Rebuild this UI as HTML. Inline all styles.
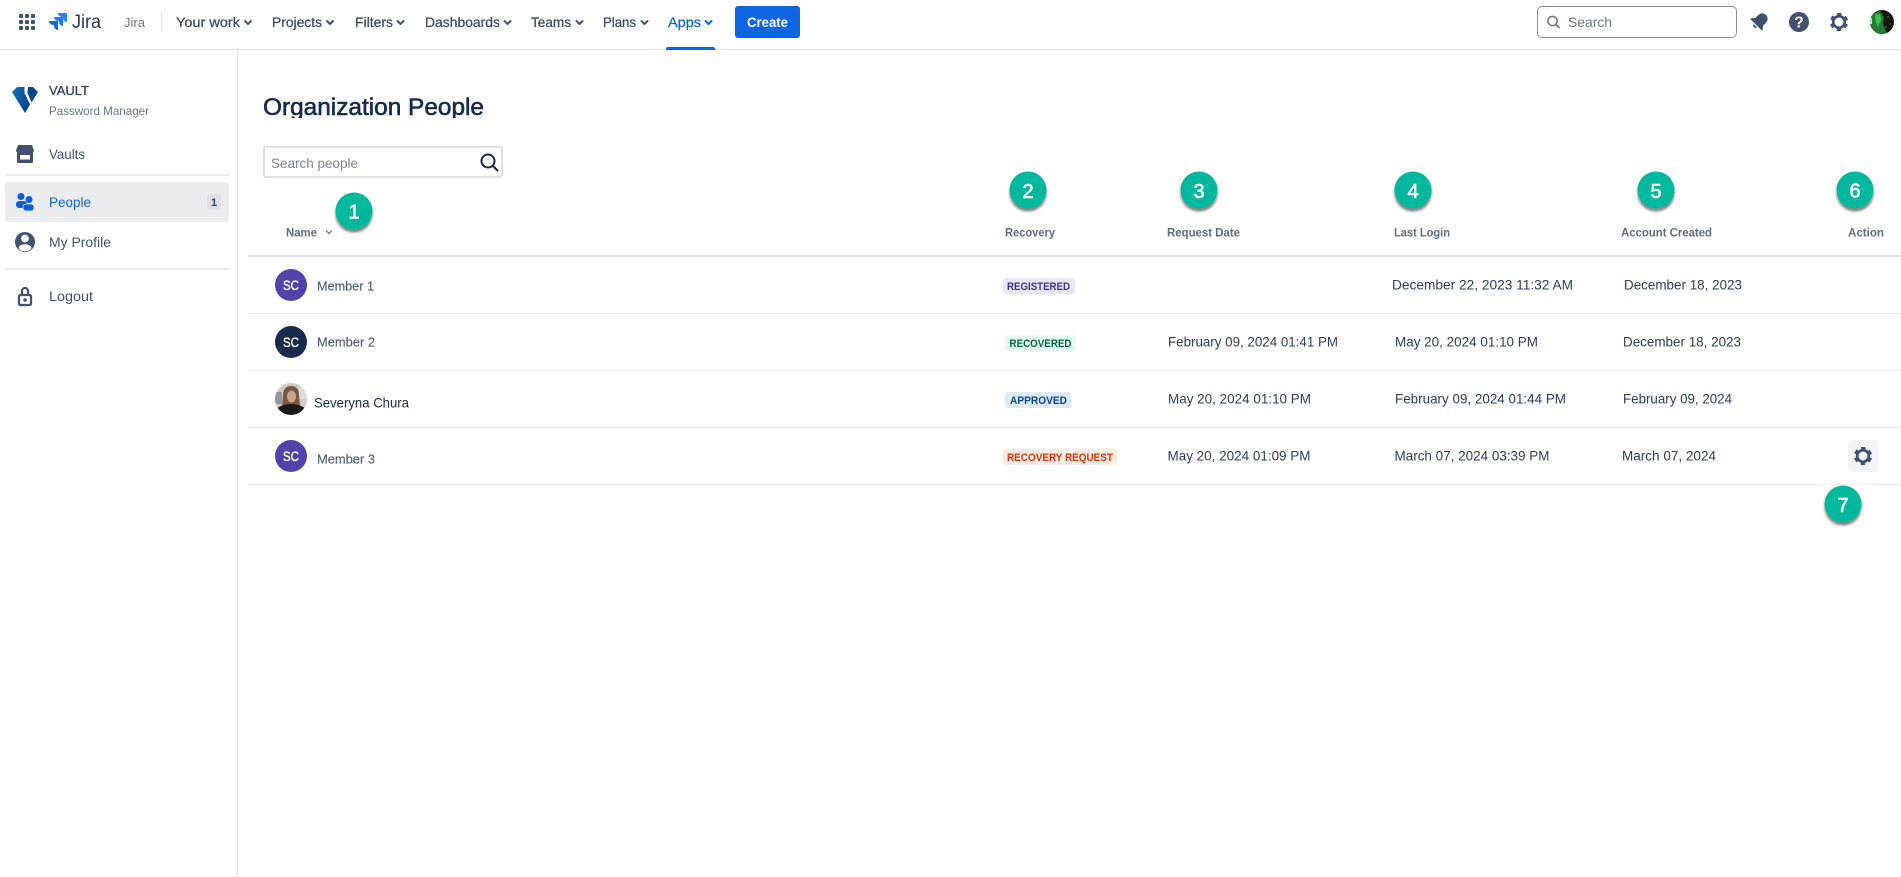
<!DOCTYPE html>
<html lang="en">
<head>
<meta charset="utf-8">
<title>Organization People</title>
<style>
html,body{margin:0;padding:0;background:#fff;width:1901px;height:877px;overflow:hidden}
svg{display:block}
text{font-family:"Liberation Sans",sans-serif;white-space:pre}
.nav{font-size:14px;fill:#3b4a66;stroke:#3b4a66;stroke-width:.25px}
.side{font-size:14px;fill:#42526e}
.th{font-size:12px;font-weight:bold;fill:#5e6c84}
.td{font-size:14px;fill:#2c3e5d}
.mem{font-size:13px;fill:#505f79;stroke:#505f79;stroke-width:.15px}
.tag{font-size:11px;font-weight:bold}
.sc{font-size:14px;fill:#fff;stroke:#fff;stroke-width:.35px}
.num{font-size:20px;fill:#fff;stroke:#fff;stroke-width:.6px;text-anchor:middle}
.chev{fill:none;stroke:#42526e;stroke-width:2;stroke-linecap:round;stroke-linejoin:round}
.cn{fill:#00b89c}
</style>
</head>
<body>
<svg xmlns="http://www.w3.org/2000/svg" width="1901" height="877" viewBox="0 0 1901 877">
<defs>
  <filter id="sh" x="-30%" y="-30%" width="160%" height="170%">
    <feDropShadow dx="0" dy="3" stdDeviation="1.2" flood-color="#000" flood-opacity=".5"/>
  </filter>
  <clipPath id="titleclip"><rect x="255" y="90" width="260" height="28"/></clipPath>
  <clipPath id="ava3"><circle cx="291" cy="399" r="16"/></clipPath>
  <clipPath id="avaTop"><circle cx="1882" cy="22" r="12"/></clipPath>
  <linearGradient id="vg" x1="0" y1="0" x2="1" y2="1">
    <stop offset="0" stop-color="#1170bb"/><stop offset=".6" stop-color="#0b4f96"/><stop offset="1" stop-color="#0a3d7d"/>
  </linearGradient>
  <g id="gear">
    <circle cx="0" cy="0" r="5.8" fill="none" stroke="#42526e" stroke-width="2.7"/>
    <circle cx="0" cy="0" r="8" fill="none" stroke="#42526e" stroke-width="2.2" stroke-dasharray="4.4 3.978" stroke-dashoffset="-2"/>
  </g>
</defs>

<rect width="1901" height="877" fill="#fff"/>

<!-- top nav -->
<rect x="0" y="49" width="1901" height="1" fill="#dfe1e6"/>
<g fill="#42526e">
  <rect x="19" y="14" width="4" height="4" rx="1"/><rect x="25" y="14" width="4" height="4" rx="1"/><rect x="31" y="14" width="4" height="4" rx="1"/>
  <rect x="19" y="20" width="4" height="4" rx="1"/><rect x="25" y="20" width="4" height="4" rx="1"/><rect x="31" y="20" width="4" height="4" rx="1"/>
  <rect x="19" y="26" width="4" height="4" rx="1"/><rect x="25" y="26" width="4" height="4" rx="1"/><rect x="31" y="26" width="4" height="4" rx="1"/>
</g>
<path transform="translate(58,13)" fill="#2684ff" d="M0 0H9V9C6.500 9 5 7 5 4.500V4C2 4 0 2.500 0 0Z"/>
<path transform="translate(54,17)" fill="#1d7afc" d="M0 0H9V9C6.500 9 5 7 5 4.500V4C2 4 0 2.500 0 0Z"/>
<path transform="translate(49,21)" fill="#0c66e4" d="M0 0H9V9C6.500 9 5 7 5 4.500V4C2 4 0 2.500 0 0Z"/>
<text x="72" y="28" font-size="19" fill="#253858" textLength="29" lengthAdjust="spacingAndGlyphs">Jira</text>
<text x="124" y="27" font-size="13" fill="#6b778c" textLength="21" lengthAdjust="spacingAndGlyphs">Jira</text>
<rect x="161" y="12" width="1" height="20" fill="#dfe1e6"/>

<text class="nav" x="176" y="27" textLength="64" lengthAdjust="spacingAndGlyphs">Your work</text>
<path class="chev" d="M245 21l3 3 3-3"/>
<text class="nav" x="272" y="27" textLength="50" lengthAdjust="spacingAndGlyphs">Projects</text>
<path class="chev" d="M327 21l3 3 3-3"/>
<text class="nav" x="355" y="27" textLength="38" lengthAdjust="spacingAndGlyphs">Filters</text>
<path class="chev" d="M397.500 21l3 3 3-3"/>
<text class="nav" x="425" y="27" textLength="75" lengthAdjust="spacingAndGlyphs">Dashboards</text>
<path class="chev" d="M504.500 21l3 3 3-3"/>
<text class="nav" x="531" y="27" textLength="40" lengthAdjust="spacingAndGlyphs">Teams</text>
<path class="chev" d="M576.500 21l3 3 3-3"/>
<text class="nav" x="603" y="27" textLength="33" lengthAdjust="spacingAndGlyphs">Plans</text>
<path class="chev" d="M641.500 21l3 3 3-3"/>
<text class="nav" x="668" y="27" textLength="33" lengthAdjust="spacingAndGlyphs" style="fill:#0c66e4;stroke:#0c66e4">Apps</text>
<path class="chev" style="stroke:#0c66e4" d="M705.500 21l3 3 3-3"/>
<path d="M666 50v-1a2 2 0 0 1 2-2h45a2 2 0 0 1 2 2v1z" fill="#0c66e4"/>
<rect x="735" y="6" width="65" height="32" rx="3" fill="#0c66e4"/>
<text x="747" y="27" font-size="14" font-weight="bold" fill="#fff" textLength="41" lengthAdjust="spacingAndGlyphs">Create</text>

<!-- search top right -->
<rect x="1537.500" y="6.500" width="199" height="31" rx="4.500" fill="#fff" stroke="#8590a2"/>
<circle cx="1552.500" cy="21" r="4.600" fill="none" stroke="#6b778c" stroke-width="1.500"/>
<path d="M1556 24.500l3 3" stroke="#6b778c" stroke-width="1.600" stroke-linecap="round"/>
<text x="1568" y="27" font-size="14" fill="#6b778c" textLength="44" lengthAdjust="spacingAndGlyphs">Search</text>
<g transform="translate(1760,21) rotate(45)" fill="#42526e">
  <path d="M0-8.500C3.500-8.500 5.500-6 5.500-2V1L8.200 4.500V5.500H-8.200V4.500L-5.500 1V-2C-5.500-6-3.500-8.500 0-8.500Z"/>
  <path d="M-2.200 6.600H2.200A2.200 2.200 0 0 1-2.200 6.600Z"/>
</g>
<circle cx="1799" cy="22" r="10" fill="#42526e"/>
<text x="1799" y="27.500" font-size="15.500" font-weight="bold" fill="#fff" text-anchor="middle">?</text>
<use href="#gear" x="1839" y="22"/>
<g clip-path="url(#avaTop)">
  <rect x="1870" y="10" width="24" height="24" fill="#14170f"/>
  <path d="M1872 14L1880 11L1884 17L1883 24L1887 34H1870V20Z" fill="#237c30"/>
  <path d="M1875 15L1880 14L1881 20L1878 27L1876 22Z" fill="#3fc14f"/>
  <circle cx="1888" cy="17" r="1" fill="#2a6a30"/><circle cx="1890" cy="24" r="1" fill="#24582a"/><circle cx="1886" cy="27" r="1" fill="#2a6a30"/>
  <rect x="1870" y="18" width="2" height="6" fill="#d9d9c8"/>
</g>

<!-- sidebar -->
<rect x="237" y="50" width="1" height="827" fill="#dfe1e6"/>
<path d="M12 92L17 87H24.500V93L30 104.500L25 113Z" fill="url(#vg)"/>
<path d="M28 87H33L38 92L31.500 102.500L27.500 93Z" fill="#0a4488"/>
<text x="49" y="95" font-size="13" fill="#344563" stroke="#344563" stroke-width=".3" textLength="40" lengthAdjust="spacingAndGlyphs">VAULT</text>
<text x="49" y="115" font-size="12" fill="#6b778c" textLength="100" lengthAdjust="spacingAndGlyphs">Password Manager</text>

<path d="M17 150H33V161.500A1.500 1.500 0 0 1 31.500 163H18.500A1.500 1.500 0 0 1 17 161.500Z" fill="#42526e"/>
<rect x="20" y="155" width="10" height="4.500" fill="#fff"/>
<path d="M18 145H32L34 150.500C34 153 30.500 153 30 151.500 29.500 153 26 153 25 151.500 24 153 20.500 153 20 151.500 19.500 153 16 153 16 150.500Z" fill="#42526e"/>
<text class="side" x="49" y="159" textLength="36" lengthAdjust="spacingAndGlyphs">Vaults</text>
<rect x="5" y="174" width="224" height="2" fill="#ebecf0"/>

<rect x="5" y="182" width="224" height="40" rx="4" fill="#ebecf0"/>
<g fill="#0c5ed6">
  <circle cx="21" cy="196.500" r="3.500"/>
  <circle cx="29" cy="199.500" r="3.500"/>
  <rect x="16" y="201" width="11" height="7" rx="3.200"/>
  <rect x="23" y="204" width="11" height="7" rx="3" stroke="#ebecf0" stroke-width=".7"/>
</g>
<text class="side" x="49" y="207" textLength="42" lengthAdjust="spacingAndGlyphs" style="fill:#0c66e4">People</text>
<rect x="207" y="194" width="14" height="16" rx="3" fill="#dfe1e6"/>
<text x="214" y="206" font-size="11" font-weight="bold" fill="#344563" text-anchor="middle">1</text>

<circle cx="25" cy="242" r="10" fill="#42526e"/>
<g fill="#fff">
  <circle cx="25" cy="238.500" r="3.900"/>
  <ellipse cx="25" cy="247.800" rx="6.300" ry="3.600"/>
</g>
<text class="side" x="49" y="247" textLength="62" lengthAdjust="spacingAndGlyphs">My Profile</text>
<rect x="5" y="268" width="224" height="2" fill="#ebecf0"/>

<path d="M22 295V291a3 3 0 0 1 6 0V295" fill="none" stroke="#42526e" stroke-width="2.200"/>
<rect x="19" y="295" width="12" height="10" rx="1.500" fill="none" stroke="#42526e" stroke-width="2.200"/>
<circle cx="25" cy="300" r="1.800" fill="#42526e"/>
<text class="side" x="49" y="301" textLength="44" lengthAdjust="spacingAndGlyphs">Logout</text>

<!-- title -->
<g clip-path="url(#titleclip)">
  <text x="263" y="115" font-size="24" fill="#172b4d" stroke="#172b4d" stroke-width=".6" textLength="221" lengthAdjust="spacingAndGlyphs">Organization People</text>
</g>

<!-- search people -->
<rect x="264" y="147" width="238" height="30" rx="2" fill="#fff" stroke="#dfe1e6" stroke-width="2"/>
<text x="271" y="168" font-size="14" fill="#7a869a" textLength="87" lengthAdjust="spacingAndGlyphs">Search people</text>
<circle cx="488" cy="161" r="6.500" fill="none" stroke="#172b4d" stroke-width="2"/>
<path d="M493 166l4.500 4.500" stroke="#172b4d" stroke-width="2.200" stroke-linecap="round"/>

<!-- table header -->
<text class="th" x="286" y="236.500" textLength="31" lengthAdjust="spacingAndGlyphs">Name</text>
<path d="M326.500 231l2.500 2.500 2.500-2.500" fill="none" stroke="#6b778c" stroke-width="1.300" stroke-linecap="round"/>
<text class="th" x="1005" y="236.500" textLength="50" lengthAdjust="spacingAndGlyphs">Recovery</text>
<text class="th" x="1167" y="236.500" textLength="73" lengthAdjust="spacingAndGlyphs">Request Date</text>
<text class="th" x="1394" y="236.500" textLength="56" lengthAdjust="spacingAndGlyphs">Last Login</text>
<text class="th" x="1621" y="236.500" textLength="91" lengthAdjust="spacingAndGlyphs">Account Created</text>
<text class="th" x="1848" y="236.500" textLength="36" lengthAdjust="spacingAndGlyphs">Action</text>
<rect x="248" y="255" width="1653" height="2" fill="#dfe1e6"/>

<!-- rows lines -->
<rect x="248" y="313" width="1653" height="1" fill="#ebecf0"/>
<rect x="248" y="370" width="1653" height="1" fill="#ebecf0"/>
<rect x="248" y="427" width="1653" height="1" fill="#ebecf0"/>
<rect x="248" y="484" width="1653" height="1" fill="#ebecf0"/>

<!-- row 1 -->
<circle cx="291" cy="285" r="16" fill="#5243aa"/>
<text class="sc" x="283" y="290" textLength="16" lengthAdjust="spacingAndGlyphs">SC</text>
<text class="mem" x="317" y="290.500" textLength="57" lengthAdjust="spacingAndGlyphs">Member 1</text>
<rect x="1003" y="278" width="72" height="16" rx="3" fill="#eae6ff"/>
<text class="tag" x="1007" y="290" fill="#403294" textLength="63" lengthAdjust="spacingAndGlyphs">REGISTERED</text>
<text class="td" x="1392" y="289.500" textLength="181" lengthAdjust="spacingAndGlyphs">December 22, 2023 11:32 AM</text>
<text class="td" x="1624" y="289.500" textLength="118" lengthAdjust="spacingAndGlyphs">December 18, 2023</text>

<!-- row 2 -->
<circle cx="291" cy="342" r="16" fill="#172b4d"/>
<text class="sc" x="283" y="347" textLength="16" lengthAdjust="spacingAndGlyphs">SC</text>
<text class="mem" x="317" y="346.500" textLength="58" lengthAdjust="spacingAndGlyphs">Member 2</text>
<rect x="1005" y="335" width="71" height="16" rx="3" fill="#e3fcef"/>
<text class="tag" x="1009.500" y="347" fill="#006644" textLength="62" lengthAdjust="spacingAndGlyphs">RECOVERED</text>
<text class="td" x="1168" y="346.500" textLength="170" lengthAdjust="spacingAndGlyphs">February 09, 2024 01:41 PM</text>
<text class="td" x="1395" y="346.500" textLength="143" lengthAdjust="spacingAndGlyphs">May 20, 2024 01:10 PM</text>
<text class="td" x="1623" y="346.500" textLength="118" lengthAdjust="spacingAndGlyphs">December 18, 2023</text>

<!-- row 3 -->
<g clip-path="url(#ava3)">
  <rect x="275" y="383" width="32" height="32" fill="#cfcac4"/>
  <rect x="299" y="383" width="8" height="16" fill="#dcdcd8"/>
  <rect x="275" y="392" width="7" height="12" fill="#8f9a9e"/>
  <path d="M283 396C283 388 287 386 291.500 386C296 386 299 389 299 395L300 406H282Z" fill="#7d563f"/>
  <ellipse cx="291.500" cy="396.500" rx="4.500" ry="6" fill="#c8a48e"/>
  <path d="M275 415V410C279 406 285 404 291 404C297 404 303 406 307 410V415Z" fill="#19181a"/>
</g>
<text x="314" y="407.500" font-size="14" fill="#172b4d" textLength="95" lengthAdjust="spacingAndGlyphs">Severyna Chura</text>
<rect x="1005" y="392" width="66" height="16" rx="3" fill="#deebff"/>
<text class="tag" x="1010" y="404" fill="#0747a6" textLength="57" lengthAdjust="spacingAndGlyphs">APPROVED</text>
<text class="td" x="1168" y="403.500" textLength="143" lengthAdjust="spacingAndGlyphs">May 20, 2024 01:10 PM</text>
<text class="td" x="1395" y="403.500" textLength="171" lengthAdjust="spacingAndGlyphs">February 09, 2024 01:44 PM</text>
<text class="td" x="1623" y="403.500" textLength="109" lengthAdjust="spacingAndGlyphs">February 09, 2024</text>

<!-- row 4 -->
<circle cx="291" cy="456" r="16" fill="#5243aa"/>
<text class="sc" x="283" y="461" textLength="16" lengthAdjust="spacingAndGlyphs">SC</text>
<text class="mem" x="317" y="463.500" textLength="58" lengthAdjust="spacingAndGlyphs">Member 3</text>
<rect x="1003" y="449" width="114" height="16" rx="3" fill="#ffebe6"/>
<text class="tag" x="1007" y="461" fill="#de350b" textLength="106" lengthAdjust="spacingAndGlyphs">RECOVERY REQUEST</text>
<text class="td" x="1167.500" y="460.500" textLength="143" lengthAdjust="spacingAndGlyphs">May 20, 2024 01:09 PM</text>
<text class="td" x="1394.500" y="460.500" textLength="155" lengthAdjust="spacingAndGlyphs">March 07, 2024 03:39 PM</text>
<text class="td" x="1622" y="460.500" textLength="94" lengthAdjust="spacingAndGlyphs">March 07, 2024</text>
<rect x="1848" y="440" width="30" height="32" rx="3" fill="#f4f5f7"/>
<use href="#gear" x="1863" y="456"/>

<!-- callouts -->
<g filter="url(#sh)">
  <circle class="cn" cx="354" cy="211" r="18.500"/>
  <circle class="cn" cx="1028" cy="190" r="18.500"/>
  <circle class="cn" cx="1199" cy="190" r="18.500"/>
  <circle class="cn" cx="1413" cy="190" r="18.500"/>
  <circle class="cn" cx="1656" cy="190" r="18.500"/>
  <circle class="cn" cx="1855" cy="190" r="18.500"/>
  <circle class="cn" cx="1843" cy="504" r="18.500"/>
</g>
<text class="num" x="354" y="218.500">1</text>
<text class="num" x="1028" y="198">2</text>
<text class="num" x="1199" y="198">3</text>
<text class="num" x="1413" y="198">4</text>
<text class="num" x="1656" y="198">5</text>
<text class="num" x="1855" y="197.500">6</text>
<text class="num" x="1843" y="512">7</text>
</svg>
</body>
</html>
